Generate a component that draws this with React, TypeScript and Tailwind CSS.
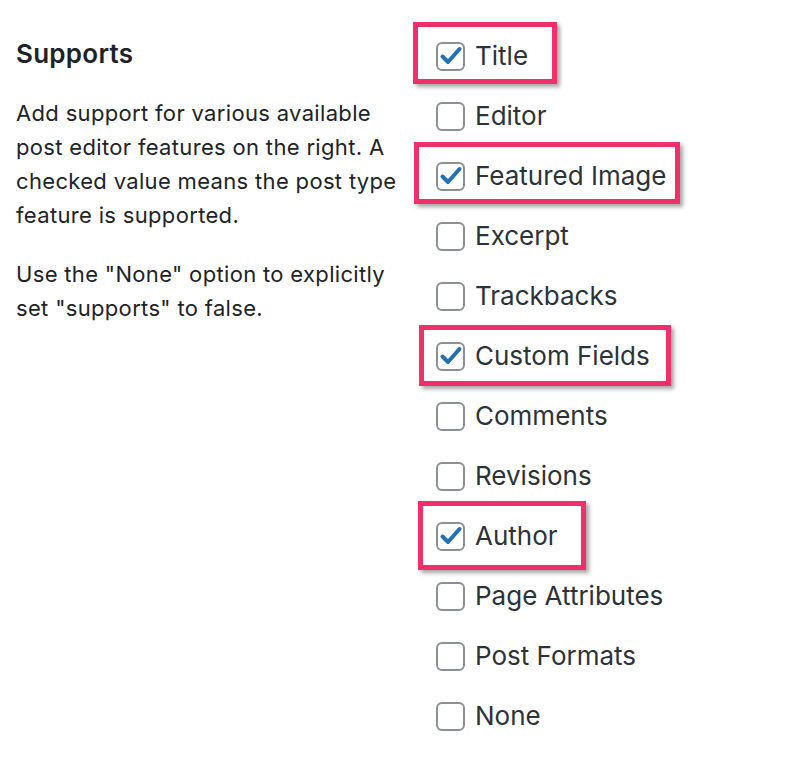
import React from 'react';

const items = [
  { label: 'Title', checked: true },
  { label: 'Editor', checked: false },
  { label: 'Featured Image', checked: true },
  { label: 'Excerpt', checked: false },
  { label: 'Trackbacks', checked: false },
  { label: 'Custom Fields', checked: true },
  { label: 'Comments', checked: false },
  { label: 'Revisions', checked: false },
  { label: 'Author', checked: true },
  { label: 'Page Attributes', checked: false },
  { label: 'Post Formats', checked: false },
  { label: 'None', checked: false },
];

const Check = () => (
  <svg width="24" height="24" viewBox="0 0 24 24" fill="none">
    <path d="M3.5 12.5 L9 18 L20.5 5" stroke="#2271b1" strokeWidth="4" strokeLinecap="round" strokeLinejoin="round" />
  </svg>
);

const Checkbox = ({ checked }: { checked: boolean }) => (
  <span className="flex h-[29px] w-[29px] shrink-0 items-center justify-center rounded-[6px] border-2 border-[#8c8f94] bg-white">
    {checked && <Check />}
  </span>
);

const Supports = () => {
  return (
    <div className="relative flex h-[762px] w-[800px] bg-white font-['Inter',sans-serif]">
      <div className="w-[436px] shrink-0 pl-4 pt-[38px]">
        <h2 className="text-[26px] leading-[32px] font-semibold tracking-[0.01em] text-[#1d2327]">Supports</h2>
        <div className="mt-[26px] w-[392px] text-[22px] leading-[34px] tracking-[0.015em] text-[#1d2327]">
          <p>Add support for various available post editor features on the right. A checked value means the post type feature is supported.</p>
          <p className="mt-[25px]">Use the "None" option to explicitly set "supports" to false.</p>
        </div>
      </div>
      <ul className="flex flex-col pt-[26px]">
        {items.map((item) => (
          <li key={item.label} className="flex h-[60px] items-center gap-[10px]">
            <Checkbox checked={item.checked} />
            <span className="text-[26px] leading-[36px] text-[#2c3338]">{item.label}</span>
          </li>
        ))}
      </ul>

      {/* pink highlight annotations */}
      <div className="absolute left-[413px] top-[22px] h-[62px] w-[144px] border-[5px] border-[#f0306b] shadow-[3px_3px_4px_rgba(0,0,0,0.35)]" />
      <div className="absolute left-[414px] top-[142px] h-[62px] w-[266px] border-[5px] border-[#f0306b] shadow-[3px_3px_4px_rgba(0,0,0,0.35)]" />
      <div className="absolute left-[419px] top-[325px] h-[61px] w-[252px] border-[5px] border-[#f0306b] shadow-[3px_3px_4px_rgba(0,0,0,0.35)]" />
      <div className="absolute left-[418px] top-[501px] h-[69px] w-[168px] border-[5px] border-[#f0306b] shadow-[3px_3px_4px_rgba(0,0,0,0.35)]" />
    </div>
  );
};

export default function App() {
  return <Supports />;
}
